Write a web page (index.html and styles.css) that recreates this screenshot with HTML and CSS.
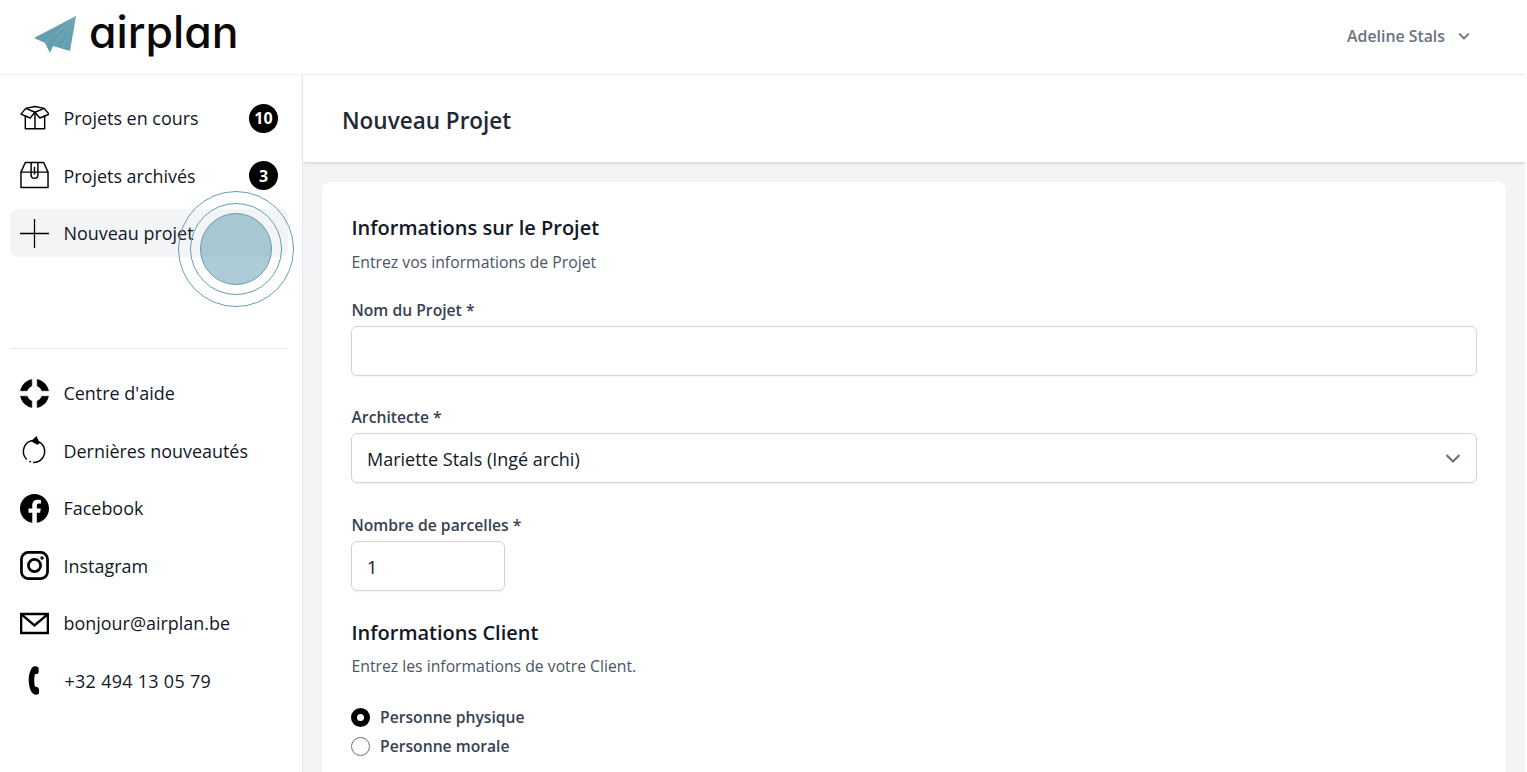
FILE: index.html
```html
<!DOCTYPE html>
<html lang="fr">
<head>
<meta charset="utf-8">
<title>Airplan - Nouveau Projet</title>
<link rel="stylesheet" href="styles.css">
</head>
<body>
<header class="topbar">
  <div class="brand">
    <svg class="brand-mark" viewBox="0 0 42 37" aria-hidden="true">
      <path fill="#649fb1" d="M0 22 42 0 36 35 19 30 16 37 11 27Z"/>
      <path fill="none" stroke="#8fbac7" stroke-width=".5" d="M42 0 11 27M42 0 19 30M42 0 28 32"/>
    </svg>
    <span class="brand-name">airplan</span>
  </div>
  <div class="user">
    <span>Adeline Stals</span>
    <svg class="user-chevron" viewBox="0 0 20 20" aria-hidden="true"><path d="M4 7 10 13 16 7" fill="none" stroke="currentColor" stroke-width="2.400"/></svg>
  </div>
</header>
<div class="layout">
  <aside class="sidebar">
    <nav class="nav-main">
      <a class="nav-item">
        <svg class="nav-icon" viewBox="0 0 30 30" aria-hidden="true"><g fill="none" stroke="#000" stroke-width="1.500" stroke-linejoin="round"><path d="M5.500 12V25.500H25.500V12"/><path d="M15.500 9V25.500"/><path d="M15.500 8.500 10.500 14.500 1 10.500 6 4.500Z"/><path d="M15.500 8.500 20.500 14.500 30 10.500 25 4.500Z"/><path d="M6 4.500 15.500 2.500 25 4.500"/></g></svg>
        <span class="nav-label">Projets en cours</span>
        <span class="badge">10</span>
      </a>
      <a class="nav-item">
        <svg class="nav-icon" viewBox="0 0 30 30" aria-hidden="true"><g fill="none" stroke="#000" stroke-width="1.500" stroke-linejoin="round"><path d="M1 11.500H29V27.500H1Z"/><path d="M1 11.500 5.500 1.500H24.500L29 11.500"/><path d="M11.500 1.500V14.500C11.500 19 18.500 19 18.500 14.500V1.500"/><path d="M15 6V14"/></g></svg>
        <span class="nav-label">Projets archivés</span>
        <span class="badge">3</span>
      </a>
      <a class="nav-item is-active">
        <svg class="nav-icon" viewBox="0 0 30 30" aria-hidden="true"><path d="M0 15H30M15 0V30" stroke="#000" stroke-width="1.300"/></svg>
        <span class="nav-label">Nouveau projet</span>
      </a>
    </nav>
    <nav class="nav-links">
      <a class="nav-item">
        <svg class="nav-icon" viewBox="0 0 30 30" aria-hidden="true"><circle cx="15" cy="15" r="11.500" fill="none" stroke="#000" stroke-width="7"/><path d="M12.500 0H17.500V30H12.500ZM0 12.500H30V17.500H0Z" fill="#fff"/><path d="M12.500 7.500V.300M17.500 7.500V.300M12.500 22.500V29.700M17.500 22.500V29.700M.300 12.500H7.500M.300 17.500H7.500M22.500 12.500H29.700M22.500 17.500H29.700" stroke="#9ca3af" stroke-width=".6"/></svg>
        <span class="nav-label">Centre d'aide</span>
      </a>
      <a class="nav-item">
        <svg class="nav-icon" viewBox="0 0 30 30" aria-hidden="true"><g fill="none" stroke="#000" stroke-width="1.500"><path d="M19 5.500A11.500 11.500 0 0 1 13.500 27.400"/><path d="M13 4.700A11.500 11.500 0 0 0 7 24.300"/></g><circle cx="10.500" cy="26.500" r="1" fill="#000"/><path d="M17 0 20.500 7.500 18 9 11.500 5.500Z" fill="#000"/></svg>
        <span class="nav-label">Dernières nouveautés</span>
      </a>
      <a class="nav-item">
        <svg class="nav-icon" viewBox="0 0 30 30" aria-hidden="true"><path fill="#000" d="M30 15C30 6.700 23.300 0 15 0S0 6.700 0 15C0 22.500 5.500 28.700 12.700 29.800V19.300H8.800V15H12.700V11.700C12.700 7.900 14.900 5.900 18.300 5.900 20 5.900 21.700 6.200 21.700 6.200V9.800H19.800C18 9.800 17.400 11 17.400 12.200V15H21.500L20.800 19.300H17.400V29.800C24.500 28.700 30 22.500 30 15Z"/></svg>
        <span class="nav-label">Facebook</span>
      </a>
      <a class="nav-item">
        <svg class="nav-icon" viewBox="0 0 30 30" aria-hidden="true"><rect x="1.500" y="1.500" width="27" height="27" rx="7" fill="none" stroke="#000" stroke-width="2.800"/><circle cx="15" cy="15" r="6.300" fill="none" stroke="#000" stroke-width="2.800"/><circle cx="22.800" cy="7.200" r="1.800" fill="#000"/></svg>
        <span class="nav-label">Instagram</span>
      </a>
      <a class="nav-item">
        <svg class="nav-icon" viewBox="0 0 30 30" aria-hidden="true"><path d="M1.200 5.200H28.800V24.800H1.200ZM1.500 5.500 15 17 28.500 5.500" fill="none" stroke="#000" stroke-width="2.400"/></svg>
        <span class="nav-label">bonjour@airplan.be</span>
      </a>
      <a class="nav-item">
        <svg class="nav-icon" viewBox="0 0 30 30" aria-hidden="true"><path fill="#000" d="M14 .500C15.500 0 18 .500 19 1.500 19.500 2 19.500 6.500 19 7.500 18 8.500 16 8 15.500 8.500 14.500 11 14.500 18 15.500 21 16 22 18 21.500 19 22.500 19.800 23.500 20 27 19.500 28.500 18.500 30 15.500 30 14 29 10 26 9 19 9 14 9 9 11 2 14 .500Z"/></svg>
        <span class="nav-label nav-phone">+32 494 13 05 79</span>
      </a>
    </nav>
    <div class="pulse" aria-hidden="true"><span class="pulse-ring"><span class="pulse-core"></span></span></div>
  </aside>
  <main class="main">
    <div class="page-head"><h1>Nouveau Projet</h1></div>
    <section class="card">
      <h2>Informations sur le Projet</h2>
      <p class="hint">Entrez vos informations de Projet</p>
      <div class="field">
        <label class="label">Nom du Projet *</label>
        <div class="control"></div>
      </div>
      <div class="field">
        <label class="label">Architecte *</label>
        <div class="control control-select">
          <span>Mariette Stals (Ingé archi)</span>
          <svg class="select-chevron" viewBox="0 0 20 20" aria-hidden="true"><path d="M3.500 7 10 13.500 16.500 7" fill="none" stroke="#6b7280" stroke-width="2.200"/></svg>
        </div>
      </div>
      <div class="field field-count">
        <label class="label">Nombre de parcelles *</label>
        <div class="control control-small"><span>1</span></div>
      </div>
      <h2 class="section-two">Informations Client</h2>
      <p class="hint hint-client">Entrez les informations de votre Client.</p>
      <div class="radios">
        <div class="radio-row"><span class="radio is-checked"></span><span class="radio-label">Personne physique</span></div>
        <div class="radio-row"><span class="radio"></span><span class="radio-label">Personne morale</span></div>
      </div>
    </section>
  </main>
</div>
</body>
</html>
```
FILE: styles.css
```css
* { box-sizing: border-box; }
html, body { margin: 0; height: 100%; overflow: hidden; }
body { font-family: "Open Sans", "Noto Sans", sans-serif; color: #111827; background: #fff; width: 1525px; }

.topbar { height: 75px; display: flex; align-items: center; justify-content: space-between; border-bottom: 1px solid #f0f1f3; padding: 0 53px 3px 34px; }
.brand { display: flex; align-items: center; gap: 13px; padding-bottom: 3px; }
.brand-mark { width: 42px; height: 37px; }
.brand-name { font-family: Inter, sans-serif; font-size: 44.500px; font-weight: 500; color: #0a0a0a; font-feature-settings: "cv11"; line-height: 1; margin-bottom: 4px; }
.user { display: flex; align-items: center; gap: 11px; font-size: 15.850px; font-weight: 600; color: #6b7280; }
.user-chevron { width: 16px; height: 16px; color: #6b7280; }

.layout { display: flex; height: 697px; }
.sidebar { position: relative; width: 303px; flex: none; border-right: 1px solid #e5e7eb; padding: 19px 14px 0 10px; }
.nav-main { display: flex; flex-direction: column; gap: 9.500px; height: 255px; border-bottom: 1px solid #e5e7eb; }
.nav-links { display: flex; flex-direction: column; gap: 9.500px; padding-top: 20px; }
.nav-item { height: 48px; display: flex; align-items: center; padding: 0 10px; border-radius: 8px; font-size: 17.950px; color: #111827; }
.nav-item.is-active { background: #f3f4f6; }
.nav-icon { width: 29px; height: 29px; flex: none; margin-right: 14.500px; }
.nav-label { flex: 1; white-space: nowrap; }
.nav-phone { letter-spacing: .3px; padding-left: 1px; }
.badge { width: 29px; height: 29px; border-radius: 50%; background: #000; color: #fff; font-size: 16px; font-weight: 700; display: flex; align-items: center; justify-content: center; }

.pulse { position: absolute; left: 178px; top: 116px; width: 116px; height: 116px; border: 1px solid #649fb1; border-radius: 50%; padding: 11px; }
.pulse-ring { display: block; width: 92px; height: 92px; border: 1px solid #649fb1; border-radius: 50%; padding: 9px; }
.pulse-core { display: block; width: 72px; height: 72px; border: 1px solid #649fb1; border-radius: 50%; background: rgba(100, 159, 177, .53); }

.main { flex: 1; min-width: 0; background: #f3f4f6; }
.page-head { height: 87px; background: #fff; display: flex; align-items: center; padding: 4px 39px 0; box-shadow: 0 1px 3px rgba(0, 0, 0, .16); }
.page-head h1 { margin: 0; font-size: 22.500px; font-weight: 600; color: #1f2937; }
.card { margin: 20px 19px 0 19px; background: #fff; border-radius: 8px; padding: 31px 29px 30px; box-shadow: 0 1px 2px rgba(0, 0, 0, .05); height: 640px; }
h2 { margin: 0; font-size: 20px; font-weight: 600; line-height: 30px; color: #111827; }
.hint { margin: 7px 0 0; font-size: 15.750px; line-height: 24px; color: #4b5563; }
.hint-client { margin-top: 6px; }
h2, .hint, .label { padding-left: .5px; }
.field { margin-top: 24px; }
.field + .field { margin-top: 29px; }
.field + .field-count { margin-top: 30px; }
.label { display: block; font-size: 15.700px; font-weight: 600; line-height: 24px; color: #374151; }
.control { margin-top: 4px; height: 50px; border: 1px solid #d1d5db; border-radius: 6px; display: flex; align-items: center; padding: 0 15px; font-size: 18px; color: #111827; box-shadow: 0 1px 2px rgba(0, 0, 0, .05); }
.control-select { justify-content: space-between; padding-right: 13px; }
.control > span { padding-top: 2px; }
.select-chevron { width: 20px; height: 20px; }
.control-small { width: 154px; }
.section-two { margin-top: 27px; }
.radios { margin-top: 27px; display: flex; flex-direction: column; gap: 5px; }
.radio-row { display: flex; align-items: center; gap: 10px; height: 24px; font-size: 15.700px; font-weight: 600; color: #374151; }
.radio { width: 19px; height: 19px; flex: none; border: 1px solid #6b7280; border-radius: 50%; background: #fff; }
.radio.is-checked { border: 6px solid #000; }
```
